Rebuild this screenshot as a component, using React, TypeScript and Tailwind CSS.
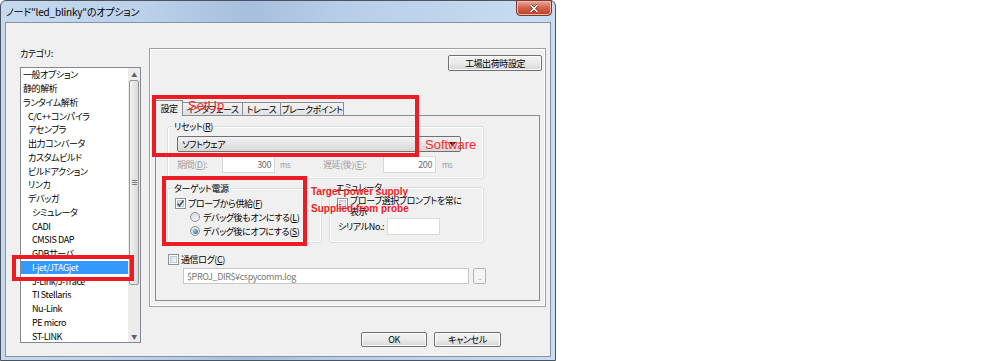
const categories: [string, number][] = [
  ["一般オプション", 0],
  ["静的解析", 0],
  ["ランタイム解析", 0],
  ["C/C++コンパイラ", 1],
  ["アセンブラ", 1],
  ["出力コンバータ", 1],
  ["カスタムビルド", 1],
  ["ビルドアクション", 1],
  ["リンカ", 1],
  ["デバッガ", 1],
  ["シミュレータ", 2],
  ["CADI", 2],
  ["CMSIS DAP", 2],
  ["GDBサーバ", 2],
  ["I-jet/JTAGjet", 2],
  ["J-Link/J-Trace", 2],
  ["TI Stellaris", 2],
  ["Nu-Link", 2],
  ["PE micro", 2],
  ["ST-LINK", 2],
];

const indent = ["pl-[2px]", "pl-[7px]", "pl-[11px]"];

const Check = ({ checked }: { checked?: boolean }) => (
  <span className="flex h-[11px] w-[11px] shrink-0 items-center justify-center border border-[#8e8f8f] bg-white">
    <span className="flex h-[7px] w-[7px] items-center justify-center border border-[#c4c8cf] bg-gradient-to-br from-[#d9dce1] to-[#f7f7f7]">
      {checked && (
        <svg width="9" height="9" viewBox="0 0 9 9" className="-m-[2px]">
          <path d="M1.5 4.5 L3.5 6.8 L7.5 1.5" fill="none" stroke="#3b4f8a" strokeWidth="1.6" />
        </svg>
      )}
    </span>
  </span>
);

const Radio = ({ on }: { on?: boolean }) => (
  <span className="flex h-[10px] w-[10px] shrink-0 items-center justify-center rounded-full border border-[#8e8f8f] bg-gradient-to-br from-[#d5d8dc] to-[#f8f8f8]">
    {on && <span className="h-[5px] w-[5px] rounded-full bg-[radial-gradient(circle_at_35%_35%,#8fc5f0,#1e5b9a)]" />}
  </span>
);

const Btn = ({ children, className }: { children: React.ReactNode; className: string }) => (
  <div
    className={`flex items-center justify-center whitespace-nowrap rounded-[2px] border border-[#707070] bg-gradient-to-b from-[#f2f2f2] via-[#ebebeb] to-[#d6d6d6] leading-none shadow-[inset_0_0_0_1px_#fcfcfc] ${className}`}
  >
    {children}
  </div>
);

const Group = ({ label, className, children }: { label: React.ReactNode; className: string; children?: React.ReactNode }) => (
  <div className={`rounded-[3px] border border-[#d5dfe5] shadow-[inset_0_0_0_1px_#ffffff] ${className}`}>
    <span className="-mt-[7px] ml-[5px] block w-fit whitespace-nowrap bg-[#f0f0f0] px-[1px] leading-[13px]">{label}</span>
    {children}
  </div>
);

const U = ({ children }: { children: React.ReactNode }) => <span className="underline underline-offset-1">{children}</span>;

export default function App() {
  return (
    <div className="relative h-[361px] w-[999px] overflow-hidden bg-white font-['Noto_Sans_CJK_JP',sans-serif] text-[9px] tracking-[-0.4px] text-black [font-feature-settings:'palt']">
      <div className="flex h-[361px] w-[556px] flex-col rounded-t-[6px] border border-[#4b5361] bg-[linear-gradient(90deg,#c6d9ee_0%,#bcd1ea_25%,#a6bfdc_45%,#b8cee8_62%,#c9dcf1_100%)] px-[4px] pb-[3px]">
        {/* title bar */}
        <div className="flex h-[21px] shrink-0 items-start">
          <span className="pl-[1px] pt-[4px] text-[10px] leading-[13px] tracking-[-0.2px]">ノード"led_blinky"のオプション</span>
          <div className="-mr-[1px] -mt-[1px] ml-auto flex h-[16px] w-[36px] items-center justify-center rounded-b-[4px] border border-[#7a3a30] bg-gradient-to-b from-[#e9a99b] via-[#d4604a] to-[#c23b22] shadow-[inset_0_0_0_1px_#f0b8aa]">
            <svg width="10" height="9" viewBox="0 0 10 9">
              <path d="M1.5 1 L8.5 8 M8.5 1 L1.5 8" stroke="#6b2a20" strokeWidth="3" />
              <path d="M1.5 1 L8.5 8 M8.5 1 L1.5 8" stroke="#ffffff" strokeWidth="1.6" />
            </svg>
          </div>
        </div>

        {/* client */}
        <div className="flex flex-1 border border-[#8393a8] bg-[#f0f0f0]">
          {/* categories */}
          <div className="ml-[14px] flex w-[121px] flex-col">
            <span className="mt-[24px] leading-[13px]">カテゴリ:</span>
            <div className="mt-[7px] flex h-[276px] border border-[#828790] bg-white">
              <div className="flex-1 overflow-hidden">
                {categories.map(([name, lvl]) => (
                  <div
                    key={name}
                    className={`flex h-[13.75px] items-center whitespace-nowrap leading-none ${indent[lvl]} ${
                      name === "I-jet/JTAGjet" ? "bg-[#3399ff] text-white" : ""
                    }`}
                  >
                    {name}
                  </div>
                ))}
              </div>
              <div className="flex w-[12px] flex-col bg-[#ececec]">
                <div className="flex h-[12px] items-center justify-center text-[6px] text-[#606060]">▲</div>
                <div className="mx-[1px] flex h-[205px] items-center justify-center rounded-[2px] border border-[#979797] bg-gradient-to-r from-[#f3f3f3] to-[#d9d9d9]">
                  <div className="flex flex-col gap-[1px]">
                    <div className="h-[1px] w-[5px] bg-[#7a7a7a]" />
                    <div className="h-[1px] w-[5px] bg-[#7a7a7a]" />
                    <div className="h-[1px] w-[5px] bg-[#7a7a7a]" />
                  </div>
                </div>
                <div className="flex-1" />
                <div className="flex h-[12px] items-center justify-center text-[6px] text-[#606060]">▼</div>
              </div>
            </div>
          </div>

          {/* right side */}
          <div className="ml-[8px] flex w-[397px] flex-col">
            <div className="mt-[25px] flex h-[259px] flex-col border border-[#a0a0a0] shadow-[inset_0_0_0_1px_#ffffff]">
              <div className="flex justify-end pr-[3px] pt-[6px]">
                <Btn className="h-[16px] w-[94px]">工場出荷時設定</Btn>
              </div>

              {/* tabs */}
              <div className="relative z-10 ml-[5px] mt-[29px] flex h-[16px] items-end whitespace-nowrap">
                <div className="flex h-[16px] w-[28px] items-center justify-center border border-b-0 border-[#898c95] bg-[#f0f0f0] leading-none">設定</div>
                <div className="flex h-[14px] w-[60px] items-center justify-center border border-l-0 border-[#898c95] bg-gradient-to-b from-[#f2f2f2] to-[#e2e2e2] leading-none">インタフェース</div>
                <div className="flex h-[14px] w-[38px] items-center justify-center border border-l-0 border-[#898c95] bg-gradient-to-b from-[#f2f2f2] to-[#e2e2e2] leading-none">トレース</div>
                <div className="flex h-[14px] w-[63px] items-center justify-center border border-l-0 border-[#898c95] bg-gradient-to-b from-[#f2f2f2] to-[#e2e2e2] leading-none">ブレークポイント</div>
              </div>
              <div className="-mt-[1px] ml-[5px] flex h-[186px] w-[385px] flex-col border border-[#898c95] bg-[#f0f0f0]">
                <Group label={<>リセット(<U>R</U>)</>} className="ml-[11px] mt-[10px] w-[317px] pb-[5px]">
                  <div className="ml-[9px] mt-[3px] flex h-[16px] w-[284px] items-center justify-between rounded-[2px] border border-[#707070] bg-gradient-to-b from-[#f2f2f2] to-[#d8d8d8] pl-[4px] pr-[4px] leading-none">
                    <span>ソフトウェア</span>
                    <svg width="7" height="4" viewBox="0 0 7 4">
                      <path d="M0 0 H7 L3.5 4 Z" fill="#000" />
                    </svg>
                  </div>
                  <div className="ml-[9px] mt-[4px] flex h-[17px] items-center whitespace-nowrap text-[#a0a0a0]">
                    <span className="w-[45px]">期間(<U>D</U>):</span>
                    <div className="flex h-[17px] w-[53px] items-center justify-end border border-[#d9d9d9] bg-white pr-[3px] text-[#6d6d6d]">300</div>
                    <span className="ml-[5px] w-[43px] text-[8px]">ms</span>
                    <span className="w-[60px]">遅延(後)(<U>E</U>):</span>
                    <div className="flex h-[17px] w-[53px] items-center justify-end border border-[#d9d9d9] bg-white pr-[3px] text-[#6d6d6d]">200</div>
                    <span className="ml-[6px] text-[8px]">ms</span>
                  </div>
                </Group>

                <div className="ml-[11px] mt-[9px] flex gap-[7px]">
                  <Group label="ターゲット電源" className="h-[55px] w-[155px]">
                    <div className="ml-[7px] mt-[2px] flex h-[12px] items-center gap-[2px] whitespace-nowrap">
                      <Check checked />
                      <span className="leading-none">プローブから供給(<U>F</U>)</span>
                    </div>
                    <div className="ml-[22px] mt-[2px] flex h-[12px] items-center gap-[3px] whitespace-nowrap">
                      <Radio />
                      <span className="leading-none">デバッグ後もオンにする(<U>L</U>)</span>
                    </div>
                    <div className="ml-[22px] mt-[2px] flex h-[12px] items-center gap-[3px] whitespace-nowrap">
                      <Radio on />
                      <span className="leading-none">デバッグ後にオフにする(<U>S</U>)</span>
                    </div>
                  </Group>
                  <Group label="エミュレータ" className="-mt-[1px] h-[56px] w-[155px]">
                    <div className="ml-[7px] mt-[1px] flex items-start gap-[2px]">
                      <div className="mt-[3px]">
                        <Check />
                      </div>
                      <span className="leading-[11px]">
                        プローブ選択プロンプトを常に
                        <br />
                        表示
                      </span>
                    </div>
                    <div className="ml-[8px] mt-[1px] flex items-center gap-[3px] whitespace-nowrap">
                      <span className="w-[46px]">シリアルNo.:</span>
                      <div className="h-[17px] w-[53px] border border-[#d9d9d9] bg-white" />
                    </div>
                  </Group>
                </div>

                <div className="ml-[12px] mt-[10px] flex h-[12px] items-center gap-[2px] whitespace-nowrap">
                  <Check />
                  <span className="leading-none">通信ログ(<U>C</U>)</span>
                </div>
                <div className="ml-[27px] mt-[3px] flex gap-[4px]">
                  <div className="flex h-[16px] w-[286px] items-center border border-[#c8c8c8] bg-white pl-[3px] leading-none text-[#7a7a7a]">
                    $PROJ_DIR$¥cspycomm.log
                  </div>
                  <div className="flex h-[16px] w-[13px] items-end justify-center rounded-[2px] border border-[#b5b5b5] bg-[#f4f4f4] pb-[2px] text-[7px] leading-none text-[#9a9a9a]">
                    ..
                  </div>
                </div>
              </div>
            </div>

            <div className="mt-[25px] flex gap-[7px] pl-[212px]">
              <Btn className="h-[15px] w-[66px] border-[#3c7fb1] shadow-[inset_0_0_0_1px_#9fd5f5]">OK</Btn>
              <Btn className="h-[15px] w-[67px]">キャンセル</Btn>
            </div>
          </div>
        </div>
      </div>

      {/* annotations */}
      <div className="absolute left-[12px] top-[255px] z-20 h-[26px] w-[122px] border-[4px] border-[#ed1c24]" />
      <div className="absolute left-[152px] top-[95px] z-20 h-[62px] w-[267px] border-[4px] border-[#ed1c24]" />
      <div className="absolute left-[162px] top-[176px] z-20 h-[70px] w-[145px] border-[4px] border-[#ed1c24]" />
      <span className="absolute left-[188px] top-[99px] z-20 font-['Liberation_Sans',sans-serif] text-[13px] leading-[14px] tracking-normal text-[#ff2a2a]">SetUp</span>
      <span className="absolute left-[425px] top-[138px] z-20 font-['Liberation_Sans',sans-serif] text-[13px] leading-[14px] tracking-normal text-[#ff2a2a]">Software</span>
      <span className="absolute left-[311px] top-[186px] z-20 font-['Liberation_Sans',sans-serif] text-[10px] font-bold leading-[12px] tracking-normal text-[#ed1c24]">Target power supply</span>
      <span className="absolute left-[311px] top-[203px] z-20 font-['Liberation_Sans',sans-serif] text-[10px] font-bold leading-[12px] tracking-normal text-[#ed1c24]">Supplied from probe</span>
    </div>
  );
}
